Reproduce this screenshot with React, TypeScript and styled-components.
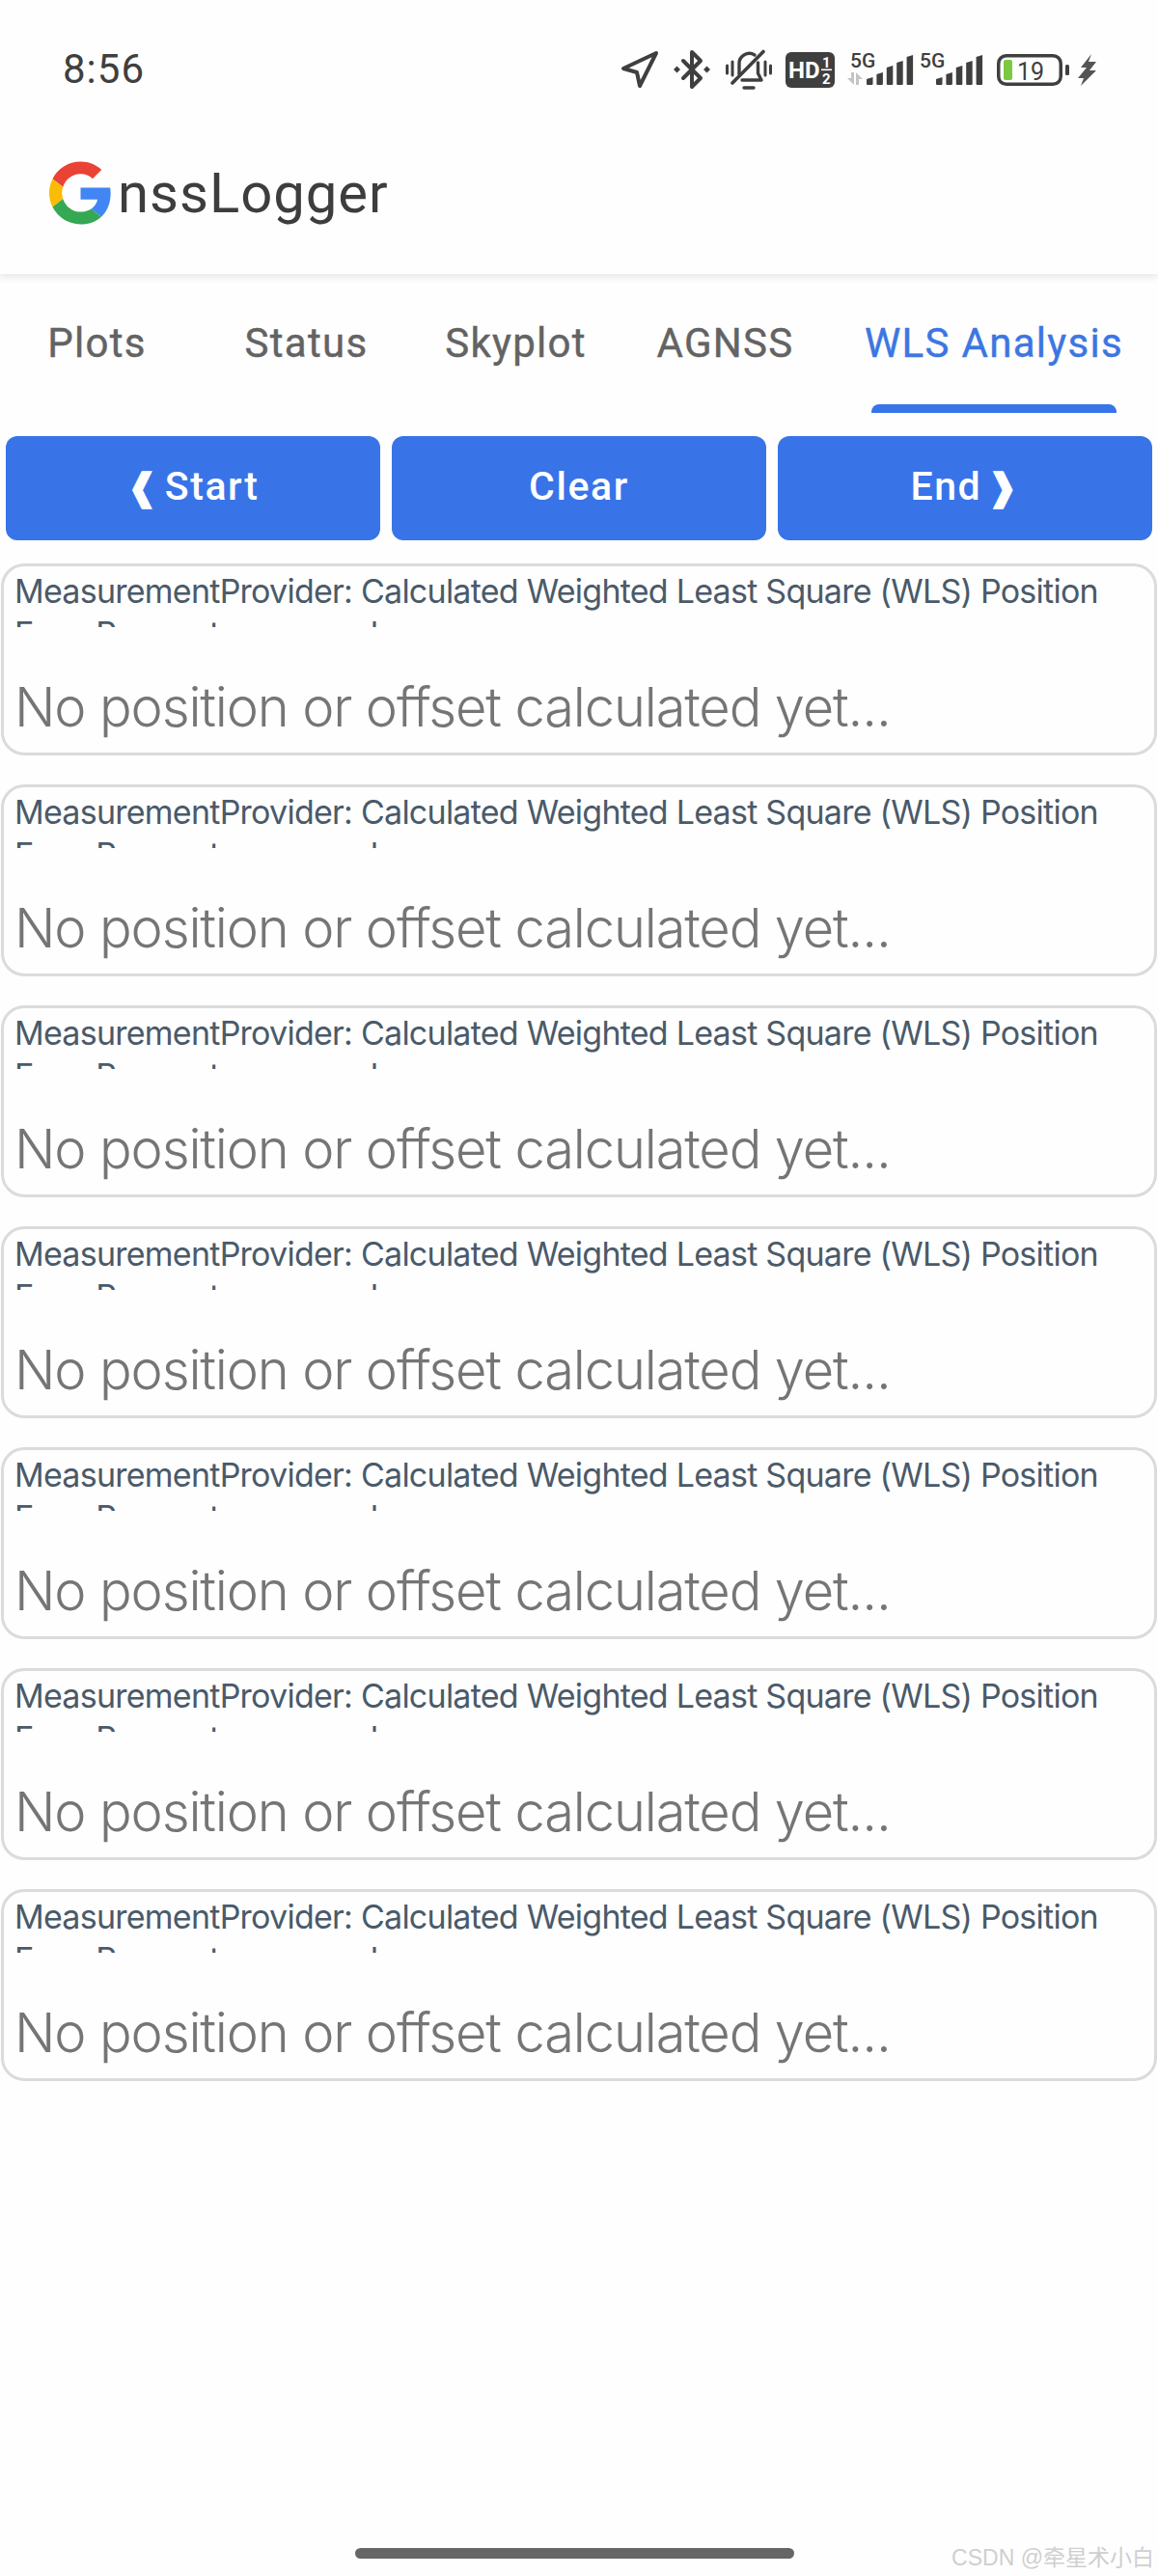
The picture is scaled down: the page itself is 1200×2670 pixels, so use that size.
import React from "react";
import styled, { createGlobalStyle } from "styled-components";

const Global = createGlobalStyle`
  html, body { margin: 0; padding: 0; background: #fefefe; }
  body { font-family: "Inter", "Noto Sans", sans-serif; }
  #root { width: 1200px; }
`;

const Page = styled.div`
  position: relative;
  width: 1200px;
  height: 2670px;
  overflow: hidden;
  background: #fefefe;
  display: flex;
  flex-direction: column;
`;

const StatusBar = styled.div`
  position: relative;
  z-index: 1;
  height: 56px;
  padding: 44px 64px 0 65px;
  display: flex;
  align-items: center;
  justify-content: space-between;
  background: #fefefe;
`;

const Time = styled.div`
  font-family: "Roboto", sans-serif;
  font-size: 42px;
  line-height: 56px;
  color: #3f3f3f;
  letter-spacing: 1px;
`;

const StatusIcons = styled.div`
  display: flex;
  align-items: center;
`;

const StatusIcon = styled.svg<{ $ml?: number }>`
  display: block;
  flex: none;
  overflow: visible;
  margin-left: ${(p) => p.$ml ?? 0}px;
`;

const Header = styled.header`
  position: relative;
  height: 168px;
  padding: 16px 0 0 51px;
  display: flex;
  align-items: center;
  background: #fefefe;
  box-shadow: 0 3px 8px rgba(0, 0, 0, 0.1);
`;

const AppTitle = styled.h1`
  margin: 0 0 0 6px;
  font-family: "Roboto", sans-serif;
  font-weight: 400;
  font-size: 58px;
  line-height: 70px;
  letter-spacing: 1px;
  color: #3d3d3d;
`;

const TabBar = styled.nav`
  display: grid;
  grid-template-columns: 217px 217px 217px 217px 340px;
  margin-left: -8px;
  padding-top: 42px;
`;

const Tab = styled.div<{ $active?: boolean }>`
  display: flex;
  flex-direction: column;
  align-items: center;
  font-family: "Roboto", sans-serif;
  font-weight: 400;
  font-size: 42px;
  line-height: 60px;
  letter-spacing: 1.3px;
  -webkit-text-stroke: 0.4px currentColor;
  white-space: nowrap;
  color: ${(p) => (p.$active ? "#3c76e2" : "#636363")};
`;

const TabMark = styled.span<{ $active?: boolean }>`
  display: block;
  width: 254px;
  height: 9px;
  margin-top: 33px;
  border-radius: 8px 8px 0 0;
  background: ${(p) => (p.$active ? "#3874e8" : "transparent")};
`;

const Actions = styled.div`
  display: grid;
  grid-template-columns: repeat(3, 1fr);
  gap: 12px;
  padding: 24px 6px;
`;

const ActionButton = styled.button`
  height: 108px;
  padding: 0 0 4px;
  border: 0;
  border-radius: 12px;
  background: #3874e8;
  color: #fff;
  font-family: "Roboto", "DejaVu Sans", sans-serif;
  font-weight: 500;
  font-size: 41px;
  letter-spacing: 1.6px;
  word-spacing: -6px;
`;

const Chevron = styled.span`
  font-family: "DejaVu Sans", sans-serif;
  font-size: 38px;
  line-height: 1;
  -webkit-text-stroke: 1.6px #fff;
`;

const Cards = styled.div`
  display: flex;
  flex-direction: column;
  gap: 30px;
`;

const Card = styled.section`
  box-sizing: border-box;
  height: 199px;
  margin: 0 1px;
  border: 3px solid #dadbdd;
  border-radius: 24px;
  padding: 4px 12px 0 11px;
`;

const CardTitle = styled.div`
  height: 59px;
  overflow: hidden;
  font-size: 34px;
  line-height: 44px;
  letter-spacing: -0.75px;
  color: #4a5a6a;
`;

const CardMessage = styled.div`
  margin-top: 50px;
  font-size: 56px;
  line-height: 67px;
  font-weight: 300;
  letter-spacing: -1.15px;
  color: #757575;
  white-space: nowrap;
`;

const HomeBar = styled.div`
  position: absolute;
  left: 368px;
  top: 2641px;
  width: 455px;
  height: 11px;
  border-radius: 6px;
  background: #666;
`;

const Watermark = styled.div`
  position: absolute;
  right: 4px;
  top: 2637px;
  font-family: "Liberation Sans", "Noto Sans CJK SC", sans-serif;
  font-size: 23px;
  line-height: 28px;
  color: #cfcfcf;
`;

const ink = "#3f3f3f";

const Signal = ({ ml, width, textX, barsX, arrows }: { ml: number; width: number; textX: number; barsX: number; arrows?: boolean }) => {
  const tops = [25, 20, 13, 8, 2];
  return (
    <StatusIcon $ml={ml} width={width} height={34} viewBox={`0 0 ${width} 34`}>
      <text x={textX} y="15" fontFamily="Roboto, sans-serif" fontWeight="500" fontSize="21" fill={ink}>5G</text>
      {arrows && <path d="M5 20 H8 V33 L1 26 H5 Z M10 33 V20 L17 27 H13 V33 Z" fill="#c4c4c4" />}
      {tops.map((t, i) => (
        <path
          key={i}
          d={`M${barsX + i * 10.4} ${t + 2} L${barsX + i * 10.4 + 6.5} ${t} V32 Q${barsX + i * 10.4 + 6.5} 33 ${barsX + i * 10.4 + 5.5} 33 H${barsX + i * 10.4 + 1} Q${barsX + i * 10.4} 33 ${barsX + i * 10.4} 32 Z`}
          fill={ink}
        />
      ))}
    </StatusIcon>
  );
};

const MeasurementCard = () => (
  <Card>
    <CardTitle>
      MeasurementProvider: Calculated Weighted Least Square (WLS) Position Error Parameters parsed
    </CardTitle>
    <CardMessage>No position or offset calculated yet...</CardMessage>
  </Card>
);

export default function App() {
  return (
    <Page>
      <Global />
      <StatusBar>
        <Time>8:56</Time>
        <StatusIcons>
          <StatusIcon width={40} height={41} viewBox="0 0 40 41">
            <path d="M3 19 L37 3 L20 37 L17 23 Z" fill="none" stroke={ink} strokeWidth="4" strokeLinejoin="round" />
          </StatusIcon>
          <StatusIcon $ml={15} width={38} height={42} viewBox="0 0 38 42">
            <path d="M10 12 L28 30 L19 39 V3 L28 12 L10 30" fill="none" stroke={ink} strokeWidth="4" strokeLinejoin="round" strokeLinecap="round" />
            <path d="M3.5 17.5 L7 21 L3.5 24.5 L0 21 Z M34.5 17.5 L38 21 L34.5 24.5 L31 21 Z" fill={ink} />
          </StatusIcon>
          <StatusIcon $ml={16} width={48} height={41} viewBox="0 0 48 41">
            <path d="M14 25 V14 A10.5 10.5 0 0 1 30 5 M33.5 13 V24 L37 31 H17" fill="none" stroke={ink} strokeWidth="3.4" strokeLinecap="round" strokeLinejoin="round" />
            <path d="M39 1.5 L7 34" stroke={ink} strokeWidth="3.6" strokeLinecap="round" />
            <path d="M19 39 H29" stroke={ink} strokeWidth="3.4" strokeLinecap="round" />
            <path d="M1.5 16 V24 M7 12 V26 M41 12 V26 M46.5 16 V24" stroke={ink} strokeWidth="3" strokeLinecap="round" />
          </StatusIcon>
          <StatusIcon $ml={14} width={51} height={37} viewBox="0 0 51 37">
            <rect width="51" height="37" rx="6" fill={ink} />
            <text x="3" y="27" fontFamily="Roboto, sans-serif" fontWeight="700" fontSize="24" fill="#fff">HD</text>
            <text x="38" y="16" fontFamily="Roboto, sans-serif" fontWeight="700" fontSize="15" fill="#fff">1</text>
            <text x="38" y="33" fontFamily="Roboto, sans-serif" fontWeight="700" fontSize="15" fill="#fff">2</text>
            <rect x="37" y="17.5" width="11" height="1.6" fill="#fff" />
          </StatusIcon>
          <Signal ml={12} width={70} textX={4} barsX={21} arrows />
          <Signal ml={3} width={67} textX={3} barsX={20} />
          <StatusIcon $ml={16} width={75} height={33} viewBox="0 0 75 33">
            <rect x="1.75" y="1.75" width="64.5" height="29.5" rx="8" fill="none" stroke={ink} strokeWidth="3.5" />
            <rect x="7" y="6" width="9" height="21" rx="2" fill="#7ac943" />
            <text x="21" y="27" fontFamily="Roboto, sans-serif" fontSize="25" fill={ink}>19</text>
            <rect x="71" y="11" width="4" height="11" rx="1.5" fill={ink} />
          </StatusIcon>
          <StatusIcon $ml={9} width={19} height={33} viewBox="0 0 19 33">
            <path d="M14 0 L3 14 H9 L0 25 H6 L3 33 L19 17 H12 L19 8 H11 Z" fill="#555" />
          </StatusIcon>
        </StatusIcons>
      </StatusBar>
      <Header>
        <svg width="65" height="66" viewBox="0 0 48 48">
          <path fill="#EA4335" d="M24 9.5c3.54 0 6.71 1.22 9.21 3.6l6.85-6.85C35.9 2.38 30.47 0 24 0 14.62 0 6.51 5.38 2.56 13.22l7.98 6.19C12.43 13.72 17.74 9.5 24 9.5z" />
          <path fill="#4285F4" d="M46.98 24.55c0-1.57-.15-3.09-.38-4.55H24v9.02h12.94c-.58 2.96-2.26 5.48-4.78 7.18l7.73 6c4.51-4.18 7.09-10.36 7.09-17.65z" />
          <path fill="#FBBC05" d="M10.53 28.59c-.48-1.45-.76-2.99-.76-4.59s.27-3.14.76-4.59l-7.98-6.19C.92 16.46 0 20.12 0 24c0 3.88.92 7.54 2.56 10.78l7.97-6.19z" />
          <path fill="#34A853" d="M24 48c6.48 0 11.93-2.13 15.89-5.81l-7.73-6c-2.15 1.45-4.92 2.3-8.16 2.3-6.26 0-11.57-4.22-13.47-9.91l-7.98 6.19C6.51 42.62 14.62 48 24 48z" />
        </svg>
        <AppTitle>nssLogger</AppTitle>
      </Header>
      <TabBar>
        <Tab>Plots<TabMark /></Tab>
        <Tab>Status<TabMark /></Tab>
        <Tab>Skyplot<TabMark /></Tab>
        <Tab>AGNSS<TabMark /></Tab>
        <Tab $active>WLS Analysis<TabMark $active /></Tab>
      </TabBar>
      <Actions>
        <ActionButton><Chevron>❰</Chevron> Start</ActionButton>
        <ActionButton>Clear</ActionButton>
        <ActionButton>End <Chevron>❱</Chevron></ActionButton>
      </Actions>
      <Cards>
        {Array.from({ length: 7 }, (_, i) => <MeasurementCard key={i} />)}
      </Cards>
      <HomeBar />
      <Watermark>CSDN @牵星术小白</Watermark>
    </Page>
  );
}
